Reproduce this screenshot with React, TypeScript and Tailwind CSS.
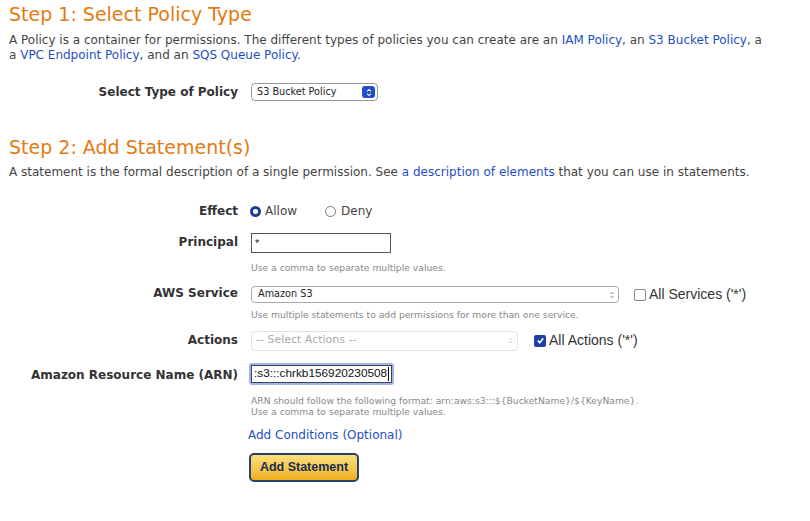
import type { ReactNode } from "react";

const verdana = { fontFamily: '"DejaVu Sans", Verdana, sans-serif' };
const helvetica = { fontFamily: '"Liberation Sans", Arial, sans-serif' };

function Label({ children }: { children: ReactNode }) {
  return (
    <div className="w-[229px] shrink-0 text-right text-[12px] font-bold text-[#333]">
      {children}
    </div>
  );
}

function UpDown({ className }: { className: string }) {
  return (
    <svg viewBox="0 0 8 12" className={className} fill="none" stroke="currentColor" strokeWidth="1.4">
      <path d="M1.5 4.5 L4 2 L6.5 4.5" />
      <path d="M1.5 7.5 L4 10 L6.5 7.5" />
    </svg>
  );
}

function Hint({ children }: { children: ReactNode }) {
  return <p className="text-[9.2px] leading-[11px] text-[#888]">{children}</p>;
}

export default function App() {
  return (
    <main className="min-h-[521px] bg-white px-[9px] pt-[2px] text-[#444]" style={verdana}>
      <h1 className="text-[19px] leading-[24px] text-[#e47a12]">Step 1: Select Policy Type</h1>
      <p className="mt-[7px] text-[12px] leading-[15px]">
        A Policy is a container for permissions. The different types of policies you can create are an{" "}
        <a className="text-[#1f4fbf]">IAM Policy</a>, an <a className="text-[#1f4fbf]">S3 Bucket Policy</a>, a
        <br />a <a className="text-[#1f4fbf]">VPC Endpoint Policy</a>, and an{" "}
        <a className="text-[#1f4fbf]">SQS Queue Policy</a>.
      </p>

      <div className="mt-[20px] flex items-center">
        <Label>Select Type of Policy</Label>
        <div className="ml-[13px] flex h-[18px] w-[127px] items-center justify-between rounded-[4px] border border-[#999] bg-white pl-[5px] pr-[2px]">
          <span className="text-[9.7px] text-[#222]">S3 Bucket Policy</span>
          <span className="flex h-[12px] w-[13px] items-center justify-center rounded-[3px] bg-[#1f4fc9] text-white">
            <UpDown className="h-[9px] w-[6px]" />
          </span>
        </div>
      </div>

      <h2 className="mt-[34px] text-[19px] leading-[24px] text-[#e47a12]">Step 2: Add Statement(s)</h2>
      <p className="mt-[6px] text-[12px] leading-[15px]">
        A statement is the formal description of a single permission. See{" "}
        <a className="text-[#1f4fbf]">a description of elements</a> that you can use in statements.
      </p>

      <div className="mt-[22px] flex items-center">
        <Label>Effect</Label>
        <div className="ml-[13px] flex items-center text-[12px] text-[#444]">
          <span className="ml-[-1px] box-border h-[11px] w-[11px] rounded-full border-[3px] border-[#1a3d9e] bg-white" />
          <span className="ml-[4px]">Allow</span>
          <span className="ml-[28px] box-border h-[11px] w-[11px] rounded-full border border-[#777] bg-white" />
          <span className="ml-[5px]">Deny</span>
        </div>
      </div>

      <div className="mt-[13px] flex items-start">
        <Label>Principal</Label>
        <div className="ml-[13px]">
          <div className="flex h-[20px] w-[140px] items-start border border-[#555] bg-white pl-[3px] pt-[1px] text-[11px] text-[#222]" style={helvetica}>
            *
          </div>
          <div className="mt-[9px]">
            <Hint>Use a comma to separate multiple values.</Hint>
          </div>
        </div>
      </div>

      <div className="mt-[11px] flex items-start">
        <Label>AWS Service</Label>
        <div className="ml-[13px]">
          <div className="flex items-center">
            <div className="flex h-[17px] w-[368px] items-center justify-between rounded-[4px] border border-[#aaa] bg-white pl-[6px] pr-[3px]">
              <span className="text-[9.7px] text-[#222]">Amazon S3</span>
              <UpDown className="h-[8px] w-[6px] text-[#777]" />
            </div>
            <span className="ml-[15px] box-border h-[12px] w-[12px] rounded-[2px] border border-[#888] bg-white" />
            <span className="ml-[3px] text-[14px] text-[#333]" style={helvetica}>
              All Services ('*')
            </span>
          </div>
          <div className="mt-[4px]">
            <Hint>Use multiple statements to add permissions for more than one service.</Hint>
          </div>
        </div>
      </div>

      <div className="mt-[10px] flex items-start">
        <div className="mt-[1px]">
          <Label>Actions</Label>
        </div>
        <div className="ml-[13px] flex items-center">
          <div className="flex h-[20px] w-[267px] items-center justify-between rounded-[4px] border border-[#e2e2e2] bg-white pl-[4px] pr-[4px]">
            <span className="text-[11px] text-[#aaa]">-- Select Actions --</span>
            <UpDown className="h-[7px] w-[5px] text-[#bbb]" />
          </div>
          <span className="ml-[16px] flex h-[12px] w-[12px] items-center justify-center rounded-[2px] bg-[#1c3fa8]">
            <svg viewBox="0 0 10 10" className="h-[9px] w-[9px]" fill="none" stroke="white" strokeWidth="1.8">
              <path d="M2 5.2 L4.2 7.4 L8 2.6" />
            </svg>
          </span>
          <span className="ml-[3px] text-[14px] text-[#333]" style={helvetica}>
            All Actions ('*')
          </span>
        </div>
      </div>

      <div className="mt-[14px] flex items-start">
        <div className="mt-[1px]">
          <Label>Amazon Resource Name (ARN)</Label>
        </div>
        <div className="ml-[13px]">
          <div className="-ml-[2px] -mt-[2px] w-[145px] rounded-[3px] bg-[#9db4ee] p-[2px]">
            <div className="flex h-[18px] w-[141px] items-center overflow-hidden border border-[#444] bg-white pl-[2px] text-[11.8px] text-[#111]" style={helvetica}>
              <span className="whitespace-nowrap">:s3:::chrkb156920230508</span>
              <span className="ml-[1px] h-[14px] w-px bg-black" />
            </div>
          </div>
          <div className="mt-[10px]">
            <Hint>ARN should follow the following format: arn:aws:s3:::${"{"}BucketName{"}"}/${"{"}KeyName{"}"}.</Hint>
            <Hint>Use a comma to separate multiple values.</Hint>
          </div>
          <a className="-ml-[3px] mt-[9px] block text-[12px] text-[#1f4fbf]">Add Conditions (Optional)</a>
          <button
            type="button"
            className="-ml-[2px] mt-[9px] h-[29px] w-[110px] rounded-[5px] border-2 border-[#27406f] bg-gradient-to-b from-[#fbe07a] to-[#eeb019] text-[12.5px] font-bold text-[#1d2c50]"
            style={helvetica}
          >
            Add Statement
          </button>
        </div>
      </div>
    </main>
  );
}
